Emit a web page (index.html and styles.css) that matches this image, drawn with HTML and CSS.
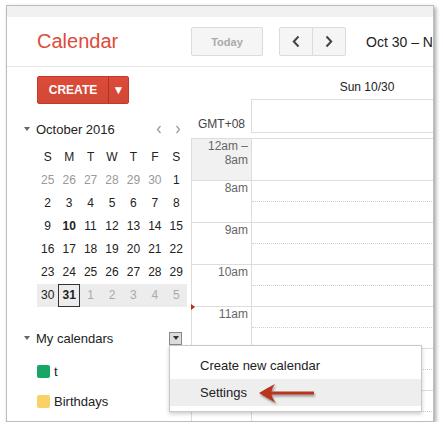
FILE: index.html
```html
<!DOCTYPE html>
<html lang="en">
<head>
    <meta charset="UTF-8">
    <meta name="viewport" content="width=device-width, initial-scale=1.0">
    <title>Calendar</title>
    <link rel="stylesheet" href="styles.css">
</head>
<body>
    <div class="window">
        <div class="topbar"></div>
        <header class="header">
            <div class="logo">Calendar</div>
            <button class="btn today">Today</button>
            <div class="nav">
                <button class="btn nav-btn prev">
                    <svg width="8" height="13" viewBox="0 0 8 13"><polyline points="6.5,1.5 1.8,6.5 6.5,11.5" fill="none" stroke="#444" stroke-width="2"/></svg>
                </button>
                <button class="btn nav-btn next">
                    <svg width="8" height="13" viewBox="0 0 8 13"><polyline points="1.5,1.5 6.2,6.5 1.5,11.5" fill="none" stroke="#444" stroke-width="2"/></svg>
                </button>
            </div>
            <div class="range">Oct 30 – Nov 5, 2016</div>
        </header>

        <div class="content">
            <aside class="sidebar">
                <div class="create">
                    <span class="create-label">CREATE</span>
                    <span class="create-more">▼</span>
                </div>

                <div class="mini-head">
                    <span class="caret"></span>
                    <span class="mini-title">October 2016</span>
                    <span class="mini-arrows">
                        <svg width="6" height="9" viewBox="0 0 6 9"><polyline points="4.5,1 1.5,4.5 4.5,8" fill="none" stroke="#999" stroke-width="1.2"/></svg>
                        <svg width="6" height="9" viewBox="0 0 6 9"><polyline points="1.5,1 4.5,4.5 1.5,8" fill="none" stroke="#999" stroke-width="1.2"/></svg>
                    </span>
                </div>

                <div class="mini-grid">
                    <span class="wd">S</span><span class="wd">M</span><span class="wd">T</span><span class="wd">W</span><span class="wd">T</span><span class="wd">F</span><span class="wd">S</span>
                    <span class="other">25</span><span class="other">26</span><span class="other">27</span><span class="other">28</span><span class="other">29</span><span class="other">30</span><span>1</span>
                    <span>2</span><span>3</span><span>4</span><span>5</span><span>6</span><span>7</span><span>8</span>
                    <span>9</span><span class="bold">10</span><span>11</span><span>12</span><span>13</span><span>14</span><span>15</span>
                    <span>16</span><span>17</span><span>18</span><span>19</span><span>20</span><span>21</span><span>22</span>
                    <span>23</span><span>24</span><span>25</span><span>26</span><span>27</span><span>28</span><span>29</span>
                    <span class="week">30</span><span class="week today-cell">31</span><span class="week next-m">1</span><span class="week next-m">2</span><span class="week next-m">3</span><span class="week next-m">4</span><span class="week next-m">5</span>
                </div>

                <div class="section-head">
                    <span class="caret"></span>
                    <span class="section-title">My calendars</span>
                    <span class="section-menu"><span class="tri"></span></span>
                </div>

                <ul class="cal-list">
                    <li><span class="swatch green"></span>t</li>
                    <li><span class="swatch yellow"></span>Birthdays</li>
                </ul>
            </aside>

            <main class="main">
                <div class="day-head"><div class="day-label">Sun 10/30</div></div>
                <div class="allday">
                    <div class="tz">GMT+08</div>
                    <div class="allday-cell"></div>
                </div>
                <div class="grid">
                    <div class="row">
                        <div class="time early">12am –<br>8am</div>
                        <div class="cell"></div>
                    </div>
                    <div class="row">
                        <div class="time">8am</div>
                        <div class="cell"><div class="half"></div></div>
                    </div>
                    <div class="row">
                        <div class="time">9am</div>
                        <div class="cell"><div class="half"></div></div>
                    </div>
                    <div class="row">
                        <div class="time">10am</div>
                        <div class="cell"><div class="half"></div></div>
                    </div>
                    <div class="row">
                        <div class="time">11am</div>
                        <div class="cell"><div class="half"></div></div>
                    </div>
                    <div class="row">
                        <div class="time">12pm</div>
                        <div class="cell"><div class="half"></div></div>
                    </div>
                    <div class="row">
                        <div class="time">1pm</div>
                        <div class="cell"><div class="half"></div></div>
                    </div>
                </div>
                <div class="now-marker"></div>
            </main>
        </div>

        <div class="menu">
            <div class="menu-item">Create new calendar</div>
            <div class="menu-item active">Settings</div>
        </div>

        <svg class="arrow" width="65" height="28" viewBox="0 0 65 28">
            <path d="M4,13 Q12,8 20,4 Q17,8 16.5,11.5 L59,11.5 L59,14.5 L16.5,14.5 Q17,18 21,23 Q12,18 4,13 Z" fill="#b8361b"/>
        </svg>
    </div>
</body>
</html>
```

FILE: styles.css
```css
body {
    margin: 0;
    background-color: #fff;
    font-family: "Liberation Sans", Arial, sans-serif;
    color: #222;
}
.window {
    position: relative;
    margin: 5px 0 0 6px;
    width: 426px;
    height: 415px;
    border: 1px solid #bdbdbd;
    box-shadow: 2px 2px 4px rgba(0, 0, 0, 0.35);
    background-color: #fff;
    display: flex;
    flex-direction: column;
    overflow: hidden;
}
.topbar {
    flex: none;
    height: 11px;
    background-color: #f1f1f1;
}

/* header */
.header {
    flex: none;
    height: 49px;
    display: flex;
    align-items: center;
    border-bottom: 1px solid #e5e5e5;
    white-space: nowrap;
}
.logo {
    flex: none;
    width: 154px;
    padding-left: 30px;
    font-size: 20px;
    color: #dd4b39;
}
.btn {
    flex: none;
    height: 29px;
    margin: 0;
    padding: 0;
    font-family: inherit;
    background-color: #f5f5f5;
    border: 1px solid #dcdcdc;
    border-radius: 2px;
}
.today {
    width: 72px;
    font-size: 11px;
    font-weight: bold;
    color: #aaa;
}
.nav {
    display: flex;
    margin-left: 16px;
}
.nav-btn {
    width: 34px;
    display: flex;
    align-items: center;
    justify-content: center;
}
.prev {
    border-radius: 2px 0 0 2px;
}
.next {
    margin-left: -1px;
    border-radius: 0 2px 2px 0;
}
.range {
    margin-left: 20px;
    font-size: 14px;
    color: #222;
}

/* body */
.content {
    flex: 1;
    display: flex;
    min-height: 0;
}
.sidebar {
    flex: none;
    width: 184px;
}
.create {
    display: flex;
    box-sizing: border-box;
    width: 92px;
    height: 28px;
    margin: 9px 0 0 30px;
    background: linear-gradient(#dd4b39, #d14836);
    border: 1px solid #c6392a;
    border-radius: 2px;
    color: #fff;
    font-size: 12px;
    font-weight: bold;
}
.create-label {
    width: 70px;
    display: flex;
    align-items: center;
    justify-content: center;
    border-right: 1px solid #b3301f;
}
.create-more {
    flex: 1;
    display: flex;
    align-items: center;
    justify-content: center;
    font-size: 12px;
}
.caret {
    flex: none;
    width: 0;
    height: 0;
    margin-right: 6px;
    border-left: 3.5px solid transparent;
    border-right: 3.5px solid transparent;
    border-top: 4px solid #666;
}
.mini-head {
    display: flex;
    align-items: center;
    width: 157px;
    height: 22px;
    margin: 14px 0 0 17px;
    padding-right: 6px;
}
.mini-title {
    flex: 1;
    font-size: 13px;
    color: #222;
}
.mini-arrows {
    display: flex;
    gap: 13px;
}
.mini-grid {
    display: grid;
    grid-template-columns: repeat(7, 1fr);
    width: 150px;
    margin: 6px 0 0 30px;
    font-size: 12px;
}
.mini-grid span {
    height: 23px;
    line-height: 23px;
    text-align: center;
    color: #222;
}
.mini-grid .other {
    color: #999;
}
.mini-grid .bold {
    font-weight: bold;
}
.mini-grid .week {
    background-color: #ececec;
}
.mini-grid .next-m {
    color: #aaa;
}
.mini-grid .today-cell {
    font-weight: bold;
    box-shadow: inset 0 0 0 1px #333;
}
.section-head {
    display: flex;
    align-items: center;
    width: 158px;
    height: 20px;
    margin: 21px 0 0 17px;
}
.section-title {
    flex: 1;
    font-size: 13px;
    color: #222;
}
.section-menu {
    box-sizing: border-box;
    width: 13px;
    height: 13px;
    display: flex;
    align-items: center;
    justify-content: center;
    background-color: #ddd;
    border: 1px solid #888;
}
.tri {
    width: 0;
    height: 0;
    border-left: 3px solid transparent;
    border-right: 3px solid transparent;
    border-top: 4px solid #333;
}
.cal-list {
    list-style: none;
    margin: 8px 0 0 30px;
    padding: 0;
}
.cal-list li {
    height: 30px;
    display: flex;
    align-items: center;
    font-size: 13px;
    color: #222;
}
.swatch {
    width: 13px;
    height: 13px;
    margin-right: 4px;
    border-radius: 2px;
}
.green {
    background-color: #16a765;
}
.yellow {
    background-color: #fad165;
}

/* day view */
.main {
    flex: 1;
    position: relative;
    overflow: hidden;
}
.day-head {
    height: 32px;
    padding-left: 60px;
}
.day-label {
    width: 232px;
    padding-top: 13px;
    text-align: center;
    font-size: 12px;
    line-height: 14px;
    color: #222;
}
.allday {
    display: flex;
    height: 34px;
}
.tz {
    flex: none;
    box-sizing: border-box;
    width: 60px;
    align-self: flex-end;
    padding: 0 6px 2px 0;
    text-align: right;
    font-size: 12px;
    line-height: 14px;
    color: #444;
}
.allday-cell {
    flex: none;
    box-sizing: border-box;
    width: 232px;
    border: 1px solid #ddd;
    border-right: none;
}
.grid {
    margin-top: 5px;
    border-top: 1px solid #ddd;
    border-left: 1px solid #ddd;
}
.row {
    display: flex;
    box-sizing: border-box;
    height: 42px;
    border-bottom: 1px solid #ddd;
}
.time {
    flex: none;
    box-sizing: border-box;
    width: 59px;
    padding-right: 3px;
    text-align: right;
    font-size: 12px;
    line-height: 14px;
    color: #666;
}
.time.early {
    background-color: #f1f1f1;
}
.cell {
    flex: none;
    width: 232px;
    border-left: 1px solid #ddd;
}
.half {
    height: 20px;
    border-bottom: 1px dotted #d0d0d0;
}
.now-marker {
    position: absolute;
    left: 0;
    top: 237px;
    width: 0;
    height: 0;
    border-left: 4px solid #c0281e;
    border-top: 3.5px solid transparent;
    border-bottom: 3.5px solid transparent;
}

/* dropdown menu */
.menu {
    position: absolute;
    left: 162px;
    top: 339px;
    width: 251px;
    padding: 6px 0 5px;
    background-color: #fff;
    border: 1px solid #c8c8c8;
    box-shadow: 0 2px 4px rgba(0, 0, 0, 0.2);
}
.menu-item {
    height: 27px;
    line-height: 27px;
    padding-left: 30px;
    font-size: 13px;
    color: #222;
}
.menu-item.active {
    background-color: #eee;
}
.arrow {
    position: absolute;
    left: 248px;
    top: 374px;
    filter: drop-shadow(1px 2px 1px rgba(0, 0, 0, 0.35));
}
```
